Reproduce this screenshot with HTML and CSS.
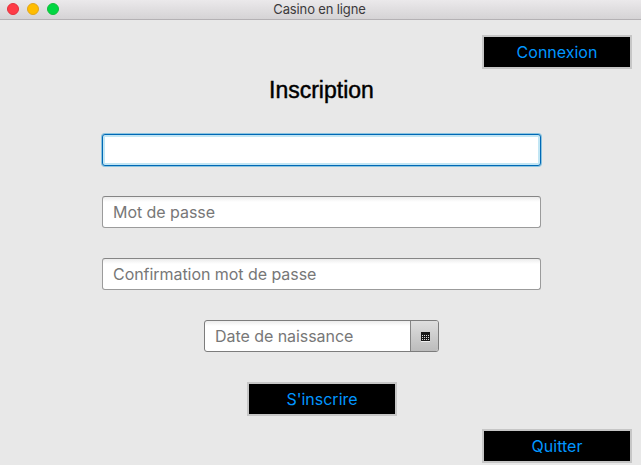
FILE: index.html
```html
<!DOCTYPE html>
<html lang="fr">
<head>
<meta charset="utf-8">
<title>Casino en ligne</title>
<link rel="stylesheet" href="styles.css">
</head>
<body>
<header class="titlebar">
  <div class="lights"><span class="light close"></span><span class="light minimize"></span><span class="light expand"></span></div>
  <span class="window-title">Casino en ligne</span>
</header>
<main class="content">
  <button class="btn btn-right">Connexion</button>
  <h1 class="heading">Inscription</h1>
  <form class="form">
    <div class="field focused"></div>
    <div class="field"><span>Mot de passe</span></div>
    <div class="field"><span>Confirmation mot de passe</span></div>
    <div class="field date"><span>Date de naissance</span>
      <div class="picker">
        <svg width="9" height="10" viewBox="0 0 9 10" shape-rendering="crispEdges"><path fill="#eee" d="M0 9h9v1H0z"/><path fill="#191919" d="M0 0h9v9H0z"/><path fill="#d8d8d8" d="M1 3h1v1H1zM3 3h1v1H3zM5 3h1v1H5zM7 3h1v1H7zM1 5h1v1H1zM3 5h1v1H3zM5 5h1v1H5zM7 5h1v1H7zM1 7h1v1H1zM3 7h1v1H3zM5 7h1v1H5zM7 7h1v1H7z"/></svg>
      </div>
    </div>
  </form>
  <button class="btn btn-center">S'inscrire</button>
  <button class="btn btn-right btn-quit">Quitter</button>
</main>
</body>
</html>
```
FILE: styles.css
```css
* { box-sizing: border-box; }
body {
  margin: 0;
  height: 465px;
  overflow: hidden;
  background: #e8e8e8;
  font-family: Inter, "Liberation Sans", sans-serif;
}
.titlebar {
  display: grid;
  grid-template-columns: 1fr auto 1fr;
  align-items: center;
  height: 20px;
  padding: 0 9px 1px 7px;
  background: linear-gradient(#ebe9eb, #d5d3d5);
  border-bottom: 1px solid #b4b1b4;
}
.lights { display: flex; gap: 8px; }
.light { width: 12px; height: 12px; border-radius: 50%; }
.close { background: #ff3b47; border: 1px solid #e3313d; }
.minimize { background: #ffbd00; border: 1px solid #e0a51c; }
.expand { background: #00d742; border: 1px solid #13bd3b; }
.window-title { font-size: 13px; line-height: 18px; letter-spacing: -0.14px; color: #3c3a3c; }
.content { display: flex; flex-direction: column; padding: 15px 9px 0 0; }
.btn {
  width: 150px;
  height: 34px;
  padding: 0;
  flex: none;
  border: 2px solid #c6c6c6;
  background: #000;
  color: #0096ff;
  font: 16px/30px Inter, sans-serif;
}
.btn-right { align-self: flex-end; }
.btn-center { margin: 30px 0 0 247px; }
.btn-quit { margin-top: 13px; }
.heading {
  margin: 7px 0 0 269px;
  font: 400 23px/28px "Liberation Sans", sans-serif;
  color: #000;
  -webkit-text-stroke: 0.45px #000;
}
.form { display: flex; flex-direction: column; gap: 30px; margin: 30px 0 0 102px; }
.field {
  display: flex;
  align-items: center;
  width: 439px;
  height: 32px;
  padding-left: 10px;
  border: 1px solid #9b9b9b;
  border-top-color: #858585;
  border-radius: 3px;
  background: linear-gradient(#ececec, #fff 5px);
  font-size: 16px;
  letter-spacing: -0.05px;
  color: #777;
}
.focused {
  border-color: #0068b5;
  background: #fff;
  box-shadow: 0 0 0 1px #8cc4df, inset 0 0 0 2px #c2e6f4;
}
.date { width: 235px; margin-left: 102px; border-color: #7c7c7c; overflow: hidden; }
.picker {
  display: grid;
  place-items: center;
  width: 28px;
  height: 30px;
  margin-left: auto;
  border-left: 1px solid #858585;
  background: linear-gradient(#dedede, #bcbcbc);
  padding: 2px 0 0 1px;
}
```
